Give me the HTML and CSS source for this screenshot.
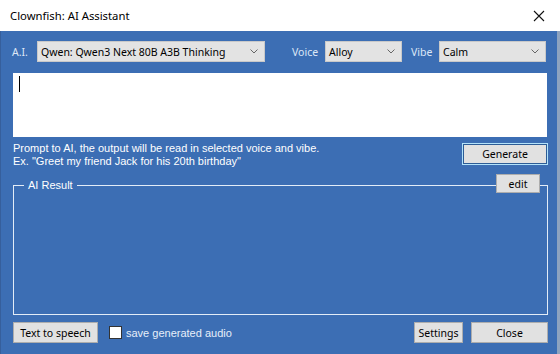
FILE: index.html
```html
<!DOCTYPE html>
<html lang="en">
<head>
    <meta charset="UTF-8">
    <title>Clownfish: AI Assistant</title>
    <link rel="stylesheet" href="styles.css">
</head>
<body>

    <div class="window">
        <!-- Title bar -->
        <div class="titlebar">
            <span class="title">Clownfish: AI Assistant</span>
            <svg class="close-x" width="12" height="12" viewBox="0 0 12 12">
                <path d="M1 1 L11 11 M11 1 L1 11" stroke="#111" stroke-width="1.1" fill="none"/>
            </svg>
        </div>

        <div class="client">
            <!-- Model / voice / vibe -->
            <div class="toolbar">
                <span class="label label-ai">A.I.</span>
                <div class="combo combo-ai">
                    <span>Qwen: Qwen3 Next 80B A3B Thinking</span>
                    <svg class="chev" width="8" height="5" viewBox="0 0 8 5"><path d="M0.5 0.5 L4 4 L7.5 0.5" stroke="#666" fill="none"/></svg>
                </div>
                <span class="label label-voice">Voice</span>
                <div class="combo combo-voice">
                    <span>Alloy</span>
                    <svg class="chev" width="8" height="5" viewBox="0 0 8 5"><path d="M0.5 0.5 L4 4 L7.5 0.5" stroke="#666" fill="none"/></svg>
                </div>
                <span class="label label-vibe">Vibe</span>
                <div class="combo combo-vibe">
                    <span>Calm</span>
                    <svg class="chev" width="8" height="5" viewBox="0 0 8 5"><path d="M0.5 0.5 L4 4 L7.5 0.5" stroke="#666" fill="none"/></svg>
                </div>
            </div>

            <!-- Prompt -->
            <div class="prompt"><span class="caret"></span></div>

            <div class="hint-row">
                <p class="hint">Prompt to AI, the output will be read in selected voice and vibe.<br>Ex. "Greet my friend Jack for his 20th birthday"</p>
                <button class="btn btn-default btn-generate">Generate</button>
            </div>

            <!-- Result -->
            <fieldset class="group">
                <legend>AI Result</legend>
                <button class="btn btn-edit">edit</button>
            </fieldset>

            <!-- Bottom buttons -->
            <div class="bottom-row">
                <button class="btn btn-tts">Text to speech</button>
                <label class="check"><span class="box"></span>save generated audio</label>
                <div class="spacer"></div>
                <button class="btn btn-settings">Settings</button>
                <button class="btn btn-close">Close</button>
            </div>
        </div>
    </div>

</body>
</html>
```

FILE: styles.css
```css
/* General */
* {
    margin: 0;
    padding: 0;
    box-sizing: border-box;
}
body {
    width: 560px;
    height: 354px;
    overflow: hidden;
    font-family: "Liberation Sans", Arial, sans-serif;
    font-size: 11px;
}
.window {
    display: flex;
    flex-direction: column;
    height: 354px;
}

/* Title bar */
.titlebar {
    height: 31px;
    background: #ffffff;
    display: flex;
    align-items: center;
    padding: 0 15px 0 10px;
}
.title {
    font-family: "Noto Sans", sans-serif;
    font-size: 11.3px;
    color: #000;
    flex: 1;
}

/* Client area */
.client {
    flex: 1;
    background: #3c6eb4;
    border-left: 1px solid #365f9c;
    border-right: 3px solid #8ea3bf;
    padding: 10px 9px 0 11px;
    display: flex;
    flex-direction: column;
}

/* Top row */
.toolbar {
    display: flex;
    align-items: center;
    height: 21px;
}
.label {
    font-family: "Noto Sans", sans-serif;
    font-size: 10.5px;
    color: #dce7f6;
}
.label-ai { width: 25px; }
.label-voice { width: 33px; margin-left: 27px; }
.label-vibe { width: 28px; margin-left: 9px; }
.combo {
    height: 21px;
    background: #e3e3e3;
    border: 1px solid #c9c9c9;
    display: flex;
    align-items: center;
    padding: 0 6px 0 3px;
    font-family: "Noto Sans", sans-serif;
    font-size: 10.5px;
    color: #000;
}
.combo span { flex: 1; white-space: nowrap; }
.combo-ai { width: 228px; }
.combo-voice { width: 77px; }
.combo-vibe { width: 107px; }

/* Prompt box */
.prompt {
    margin-top: 11px;
    margin-left: 1px;
    width: 534px;
    height: 64px;
    background: #ffffff;
    padding: 3px 6px;
}
.caret {
    display: block;
    width: 1px;
    height: 16px;
    background: #000;
}

/* Hint + generate */
.hint-row {
    display: flex;
    justify-content: space-between;
    align-items: flex-start;
    margin-top: 5px;
}
.hint {
    color: #ffffff;
    line-height: 13px;
    padding-left: 1px;
}
.btn {
    background: #e1e1e1;
    border: 1px solid #adadad;
    color: #000;
    font-family: "Noto Sans", sans-serif;
    font-size: 10.5px;
    height: 21px;
}
.btn-default {
    border: 1px solid #b3e2fa;
    box-shadow: inset 0 0 0 1px #2c5c96;
}
.btn-generate {
    width: 86px;
    height: 22px;
    margin-top: 1px;
}

/* Group box */
.group {
    position: relative;
    border: 1px solid #e3ecf7;
    margin: 11px 0 0 1px;
    width: 535px;
    height: 136px;
    padding: 0;
}
.group legend {
    color: #ffffff;
    font-size: 11px;
    padding: 0 4px;
    margin-left: 10px;
    line-height: 13px;
}
.btn-edit {
    position: absolute;
    top: -18px;
    right: 7px;
    width: 44px;
    height: 19px;
}

/* Bottom row */
.bottom-row {
    display: flex;
    align-items: center;
    margin-top: 7px;
}
.btn-tts { width: 85px; margin-left: 1px; }
.check {
    display: flex;
    align-items: center;
    color: #e6eefa;
    margin-left: 11px;
}
.check .box {
    width: 13px;
    height: 13px;
    background: #ffffff;
    border: 1px solid #333;
    margin-right: 4px;
}
.spacer { flex: 1; }
.btn-settings { width: 49px; }
.btn-close { width: 77px; margin-left: 8px; }
```
